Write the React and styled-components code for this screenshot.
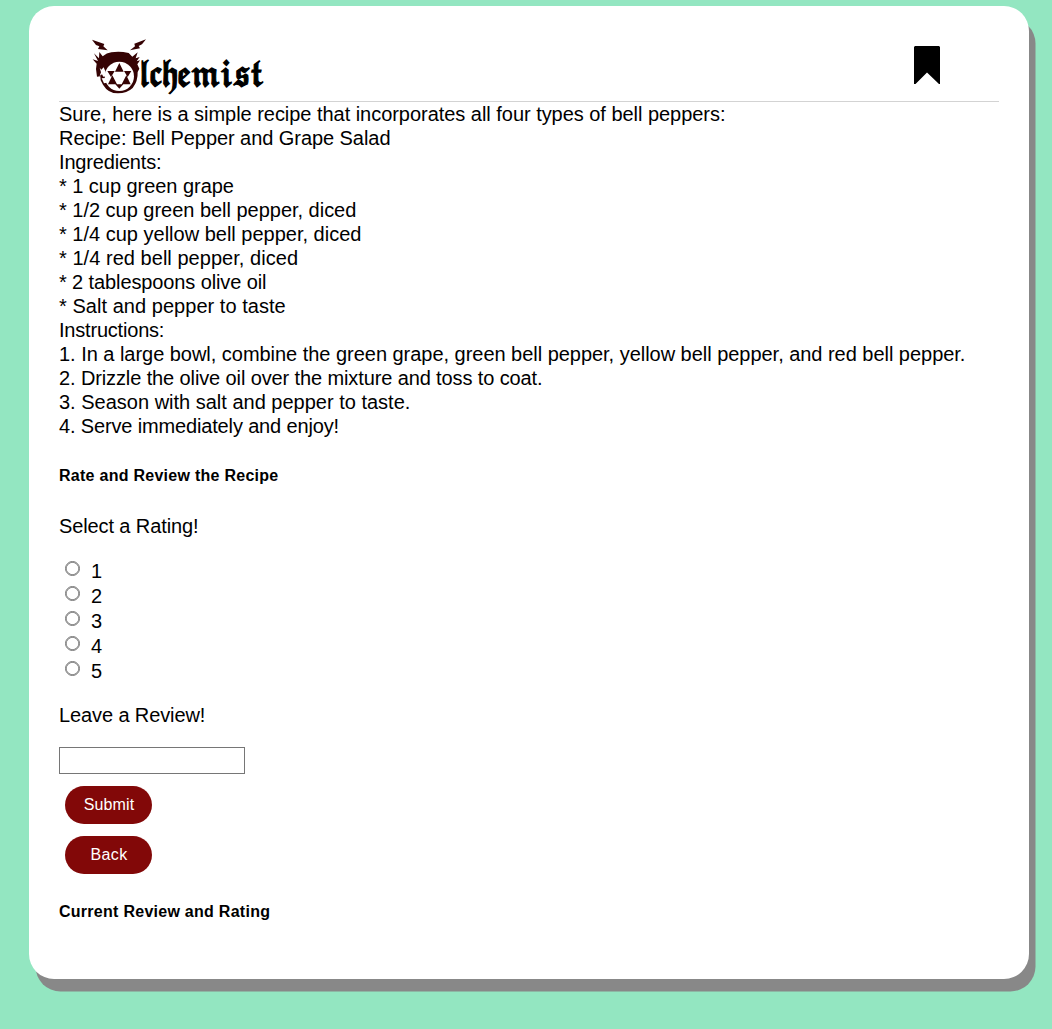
import React from "react";
import styled, { createGlobalStyle } from "styled-components";

const GlobalStyle = createGlobalStyle`
  * { box-sizing: border-box; }
  body {
    margin: 0;
    min-height: 1029px;
    background: #93e6c1;
    color: #000;
    font-family: "Liberation Sans", Arial, sans-serif;
    font-size: 20px;
    line-height: 24px;
  }
`;

const Page = styled.main`
  padding: 6px 23px 50px 29px;
`;

const Card = styled.section`
  display: flex;
  flex-direction: column;
  align-items: flex-start;
  width: 1000px;
  height: 973px;
  padding: 30px;
  border-radius: 25px;
  background: #fff;
  box-shadow: 6.5px 12.5px 0 #888;
`;

const Header = styled.header`
  display: flex;
  justify-content: space-between;
  align-items: flex-start;
  width: 940px;
  height: 66px;
  padding: 0 59px 0 30px;
  border-bottom: 1px solid #d3d3d3;
`;

const Logo = styled.svg`
  display: block;
  width: 180px;
  height: 63px;
  overflow: visible;
`;

const Wordmark = styled.text`
  font-family: "DejaVu Sans", "DejaVu Math TeX Gyre", serif;
  font-size: 98px;
  letter-spacing: -7px;
  stroke: #000;
  stroke-width: 4px;
`;

const Bookmark = styled.svg`
  display: block;
  width: 26px;
  height: 38px;
  margin-top: 10px;
`;

const Line = styled.div`
  height: 24px;
  white-space: nowrap;
  letter-spacing: ${(p) => p.$spacing || 0}px;
`;

const Heading = styled.h5`
  margin: ${(p) => p.$top}px 0 0;
  font-size: 16px;
  line-height: 20px;
  letter-spacing: 0.27px;
`;

const Prompt = styled.p`
  margin: ${(p) => p.$top}px 0 0;
  line-height: 24px;
  letter-spacing: -0.11px;
`;

const Ratings = styled.div`
  display: flex;
  flex-direction: column;
  margin-top: 20px;
`;

const Rating = styled.label`
  display: flex;
  align-items: flex-start;
  gap: 11px;
  height: 25px;
  padding-left: 6px;
  line-height: 26px;
`;

const Radio = styled.input`
  appearance: none;
  width: 15px;
  height: 15px;
  margin: 3px 0 0;
  border: 1px solid #767676;
  border-radius: 50%;
  box-shadow: inset 0 0 0 0.7px #767676;
  &:checked {
    background: radial-gradient(#767676 45%, #fff 50%);
  }
`;

const ReviewInput = styled.input`
  width: 186px;
  height: 27px;
  margin-top: 20px;
  border: 1px solid #767676;
  border-radius: 0;
  font: inherit;
`;

const Button = styled.button`
  width: 87px;
  height: 38px;
  margin: 12px 0 0 6px;
  padding: 0 0 0 1px;
  border: 0;
  border-radius: 20px;
  background: #820808;
  color: #fff;
  font-family: inherit;
  font-size: 16px;
  letter-spacing: ${(p) => p.$spacing || 0}px;
`;

const recipe = [
  ["Sure, here is a simple recipe that incorporates all four types of bell peppers:", -0.035],
  ["Recipe: Bell Pepper and Grape Salad", -0.06],
  ["Ingredients:", -0.18],
  ["* 1 cup green grape", -0.04],
  ["* 1/2 cup green bell pepper, diced", -0.02],
  ["* 1/4 cup yellow bell pepper, diced", 0],
  ["* 1/4 red bell pepper, diced", 0.04],
  ["* 2 tablespoons olive oil", -0.11],
  ["* Salt and pepper to taste", 0.04],
  ["Instructions:", -0.2],
  ["1. In a large bowl, combine the green grape, green bell pepper, yellow bell pepper, and red bell pepper.", -0.03],
  ["2. Drizzle the olive oil over the mixture and toss to coat.", -0.115],
  ["3. Season with salt and pepper to taste.", 0],
  ["4. Serve immediately and enjoy!", -0.15],
];

function AlchemistLogo() {
  return (
    <Logo viewBox="27 18 540 189" aria-label="Alchemist">
      <g fill="#350304">
        <path d="M36 29 L73 42 L70 49 L83 61 L54 57 L58 49 L48 45Z" />
        <path d="M198 28 L163 41 L165 49 L150 61 L180 55 L176 48 L186 43Z" />
        <path d="M48 117 L50 101 L38 88 L54 93 L42 70 L57 85 L58 66 L68 79 Q80 69 94 67 Q118 62 146 69 L157 80 L173 67 L167 85 L179 81 L170 94 L180 91 L172 103 L178 116 L173 126 Q174 154 158 174 Q141 190 114 190 Q84 190 69 164 L62 151 L61 139 L51 140Z" />
      </g>
      <circle cx="118" cy="139" r="44" fill="#fff" />
      <path
        d="M59 113 L64 119 L71 112 L76 124 L78 138 L70 140 L66 133 L59 138 L63 127Z M65 145 L76 144 L80 158 L72 160Z"
        fill="#fff"
      />
      <path
        d="M118 99 L131 125 H105Z M82 123 H104 L93 141Z M132 123 H154 L143 141Z M97 136 L111 163 H84Z M139 136 L152 163 H125Z M106 163 H130 L118 176Z"
        fill="#350304"
      />
      <Wordmark x="179" y="168" textLength="370" lengthAdjust="spacingAndGlyphs">
        𝖑𝖈𝖍𝖊𝖒𝖎𝖘𝖙
      </Wordmark>
    </Logo>
  );
}

export default function App() {
  return (
    <>
      <GlobalStyle />
      <Page>
        <Card>
          <Header>
            <AlchemistLogo />
            <Bookmark viewBox="0 0 26 38" aria-label="Bookmark">
              <path d="M1 0H25L26 1V38H25L13 26.5L1.500 38H0V1Z" />
            </Bookmark>
          </Header>
          {recipe.map(([line, spacing]) => (
            <Line key={line} $spacing={spacing}>{line}</Line>
          ))}
          <Heading $top={28}>Rate and Review the Recipe</Heading>
          <Prompt $top={28}>Select a Rating!</Prompt>
          <Ratings>
            {[1, 2, 3, 4, 5].map((n) => (
              <Rating key={n}>
                <Radio type="radio" name="rating" value={n} />
                {n}
              </Rating>
            ))}
          </Ratings>
          <Prompt $top={20}>Leave a Review!</Prompt>
          <ReviewInput aria-label="Review" />
          <Button $spacing={0.1}>Submit</Button>
          <Button $spacing={0.4}>Back</Button>
          <Heading $top={28}>Current Review and Rating</Heading>
        </Card>
      </Page>
    </>
  );
}
